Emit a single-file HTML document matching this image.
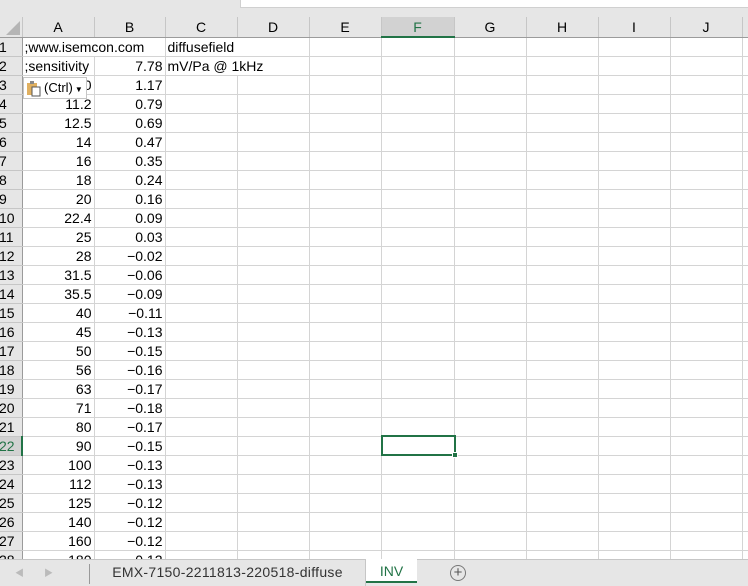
<!DOCTYPE html>
<html><head><meta charset="utf-8"><style>
*{margin:0;padding:0;box-sizing:border-box}
body{width:748px;height:586px;overflow:hidden;background:#e6e6e6;font-family:"Liberation Sans","Noto Sans CJK JP",sans-serif;font-size:14px;color:#000;position:relative}
#top{position:absolute;left:240px;top:0;width:508px;height:8px;background:#fff;border-bottom:1px solid #d0d0d0;border-left:1px solid #d0d0d0}
#grid{position:absolute;left:0;top:17px;border-collapse:collapse;table-layout:fixed;width:752px}
#grid td{height:19px;border-right:1px solid #d4d4d4;border-bottom:1px solid #d4d4d4;background:#fff;white-space:nowrap;overflow:hidden;padding:0 2px;line-height:18px}
#grid tr.h td{background:#e6e6e6;text-align:center;border-right:1px solid #c6c6c6;border-bottom:1px solid #9b9b9b;height:20px;font-size:14px}
#grid td.r{background:#e6e6e6;border-right:1px solid #9b9b9b;border-bottom:1px solid #c6c6c6;padding:0;font-size:14px;text-indent:-1px}
#grid td.n{text-align:right}
#grid td.ov{overflow:visible}
#grid tr.h td.sel{background:#d2d2d2;color:#217346;border-bottom:2px solid #217346}
#grid td.rs{background:#d2d2d2;color:#217346;border-right:2px solid #217346}
#cell{position:absolute;left:381px;top:435px;width:75px;height:21px;border:2px solid #217346}
#handle{position:absolute;left:452px;top:452px;width:6px;height:6px;background:#217346;border:1px solid #fff}
#paste{position:absolute;left:23px;top:77px;width:64px;height:22px;background:#fff;border:1px solid #c6c6c6;font-size:13px;line-height:20px;padding-left:20px}
#tabs{position:absolute;left:0;top:559px;width:748px;height:27px;background:#e6e6e6;border-top:1px solid #c6c6c6;font-size:14px}
</style></head><body>
<div id="top"></div>
<table id="grid">
<colgroup><col style="width:22px"><col style="width:72px"><col style="width:71px"><col style="width:72px"><col style="width:72px"><col style="width:72px"><col style="width:73px"><col style="width:72px"><col style="width:72px"><col style="width:72px"><col style="width:72px"><col style="width:10px"></colgroup>
<tr class="h"><td style="position:relative"><svg width="14" height="14" style="position:absolute;right:2px;bottom:2px"><polygon points="14,0 14,14 0,14" fill="#b5b5b5"/></svg></td><td>A</td><td>B</td><td>C</td><td>D</td><td>E</td><td class="sel">F</td><td>G</td><td>H</td><td>I</td><td>J</td><td></td></tr>
<tr><td class="r">1</td><td class="ov" colspan="2">;www.isemcon.com</td><td class="ov" colspan="2">diffusefield</td><td></td><td></td><td></td><td></td><td></td><td></td><td></td></tr>
<tr><td class="r">2</td><td>;sensitivity</td><td class="n">7.78</td><td class="ov" colspan="2">mV/Pa @ 1kHz</td><td></td><td></td><td></td><td></td><td></td><td></td><td></td></tr>
<tr><td class="r">3</td><td class="n">10</td><td class="n">1.17</td><td></td><td></td><td></td><td></td><td></td><td></td><td></td><td></td><td></td></tr>
<tr><td class="r">4</td><td class="n">11.2</td><td class="n">0.79</td><td></td><td></td><td></td><td></td><td></td><td></td><td></td><td></td><td></td></tr>
<tr><td class="r">5</td><td class="n">12.5</td><td class="n">0.69</td><td></td><td></td><td></td><td></td><td></td><td></td><td></td><td></td><td></td></tr>
<tr><td class="r">6</td><td class="n">14</td><td class="n">0.47</td><td></td><td></td><td></td><td></td><td></td><td></td><td></td><td></td><td></td></tr>
<tr><td class="r">7</td><td class="n">16</td><td class="n">0.35</td><td></td><td></td><td></td><td></td><td></td><td></td><td></td><td></td><td></td></tr>
<tr><td class="r">8</td><td class="n">18</td><td class="n">0.24</td><td></td><td></td><td></td><td></td><td></td><td></td><td></td><td></td><td></td></tr>
<tr><td class="r">9</td><td class="n">20</td><td class="n">0.16</td><td></td><td></td><td></td><td></td><td></td><td></td><td></td><td></td><td></td></tr>
<tr><td class="r">10</td><td class="n">22.4</td><td class="n">0.09</td><td></td><td></td><td></td><td></td><td></td><td></td><td></td><td></td><td></td></tr>
<tr><td class="r">11</td><td class="n">25</td><td class="n">0.03</td><td></td><td></td><td></td><td></td><td></td><td></td><td></td><td></td><td></td></tr>
<tr><td class="r">12</td><td class="n">28</td><td class="n">−0.02</td><td></td><td></td><td></td><td></td><td></td><td></td><td></td><td></td><td></td></tr>
<tr><td class="r">13</td><td class="n">31.5</td><td class="n">−0.06</td><td></td><td></td><td></td><td></td><td></td><td></td><td></td><td></td><td></td></tr>
<tr><td class="r">14</td><td class="n">35.5</td><td class="n">−0.09</td><td></td><td></td><td></td><td></td><td></td><td></td><td></td><td></td><td></td></tr>
<tr><td class="r">15</td><td class="n">40</td><td class="n">−0.11</td><td></td><td></td><td></td><td></td><td></td><td></td><td></td><td></td><td></td></tr>
<tr><td class="r">16</td><td class="n">45</td><td class="n">−0.13</td><td></td><td></td><td></td><td></td><td></td><td></td><td></td><td></td><td></td></tr>
<tr><td class="r">17</td><td class="n">50</td><td class="n">−0.15</td><td></td><td></td><td></td><td></td><td></td><td></td><td></td><td></td><td></td></tr>
<tr><td class="r">18</td><td class="n">56</td><td class="n">−0.16</td><td></td><td></td><td></td><td></td><td></td><td></td><td></td><td></td><td></td></tr>
<tr><td class="r">19</td><td class="n">63</td><td class="n">−0.17</td><td></td><td></td><td></td><td></td><td></td><td></td><td></td><td></td><td></td></tr>
<tr><td class="r">20</td><td class="n">71</td><td class="n">−0.18</td><td></td><td></td><td></td><td></td><td></td><td></td><td></td><td></td><td></td></tr>
<tr><td class="r">21</td><td class="n">80</td><td class="n">−0.17</td><td></td><td></td><td></td><td></td><td></td><td></td><td></td><td></td><td></td></tr>
<tr><td class="r rs">22</td><td class="n">90</td><td class="n">−0.15</td><td></td><td></td><td></td><td></td><td></td><td></td><td></td><td></td><td></td></tr>
<tr><td class="r">23</td><td class="n">100</td><td class="n">−0.13</td><td></td><td></td><td></td><td></td><td></td><td></td><td></td><td></td><td></td></tr>
<tr><td class="r">24</td><td class="n">112</td><td class="n">−0.13</td><td></td><td></td><td></td><td></td><td></td><td></td><td></td><td></td><td></td></tr>
<tr><td class="r">25</td><td class="n">125</td><td class="n">−0.12</td><td></td><td></td><td></td><td></td><td></td><td></td><td></td><td></td><td></td></tr>
<tr><td class="r">26</td><td class="n">140</td><td class="n">−0.12</td><td></td><td></td><td></td><td></td><td></td><td></td><td></td><td></td><td></td></tr>
<tr><td class="r">27</td><td class="n">160</td><td class="n">−0.12</td><td></td><td></td><td></td><td></td><td></td><td></td><td></td><td></td><td></td></tr>
<tr><td class="r">28</td><td class="n">180</td><td class="n">−0.12</td><td></td><td></td><td></td><td></td><td></td><td></td><td></td><td></td><td></td></tr>
</table>
<div id="cell"></div><div id="handle"></div>
<div id="paste"><svg width="16" height="16" style="position:absolute;left:3px;top:3px"><rect x="0" y="2" width="10" height="12" fill="#e0b060"/><rect x="3" y="0" width="4" height="3" fill="#888"/><rect x="5" y="6" width="8" height="9" fill="#fff" stroke="#555"/></svg>(Ctrl)<span style="font-size:8px;margin-left:2px">▼</span></div>
<div id="tabs">
<span style="position:absolute;left:15px;top:6px;color:#bbb;font-size:9px">◀</span>
<span style="position:absolute;left:44px;top:6px;color:#bbb;font-size:9px">▶</span>
<div style="position:absolute;left:89px;top:4px;width:1px;height:20px;background:#999"></div>
<div style="position:absolute;left:90px;top:0;width:276px;height:26px;border-right:1px solid #c6c6c6;text-align:center;line-height:24px;color:#333;letter-spacing:0.3px">EMX-7150-2211813-220518-diffuse</div>
<div style="position:absolute;left:366px;top:-1px;width:51px;height:24px;background:#fff;border-bottom:2px solid #217346;text-align:center;line-height:24px;color:#217346">INV</div>
<div style="position:absolute;left:450px;top:5px;width:16px;height:16px;border:1px solid #777;border-radius:50%;text-align:center;line-height:13px;color:#555;font-size:15px">+</div>
</div>
</body></html>
